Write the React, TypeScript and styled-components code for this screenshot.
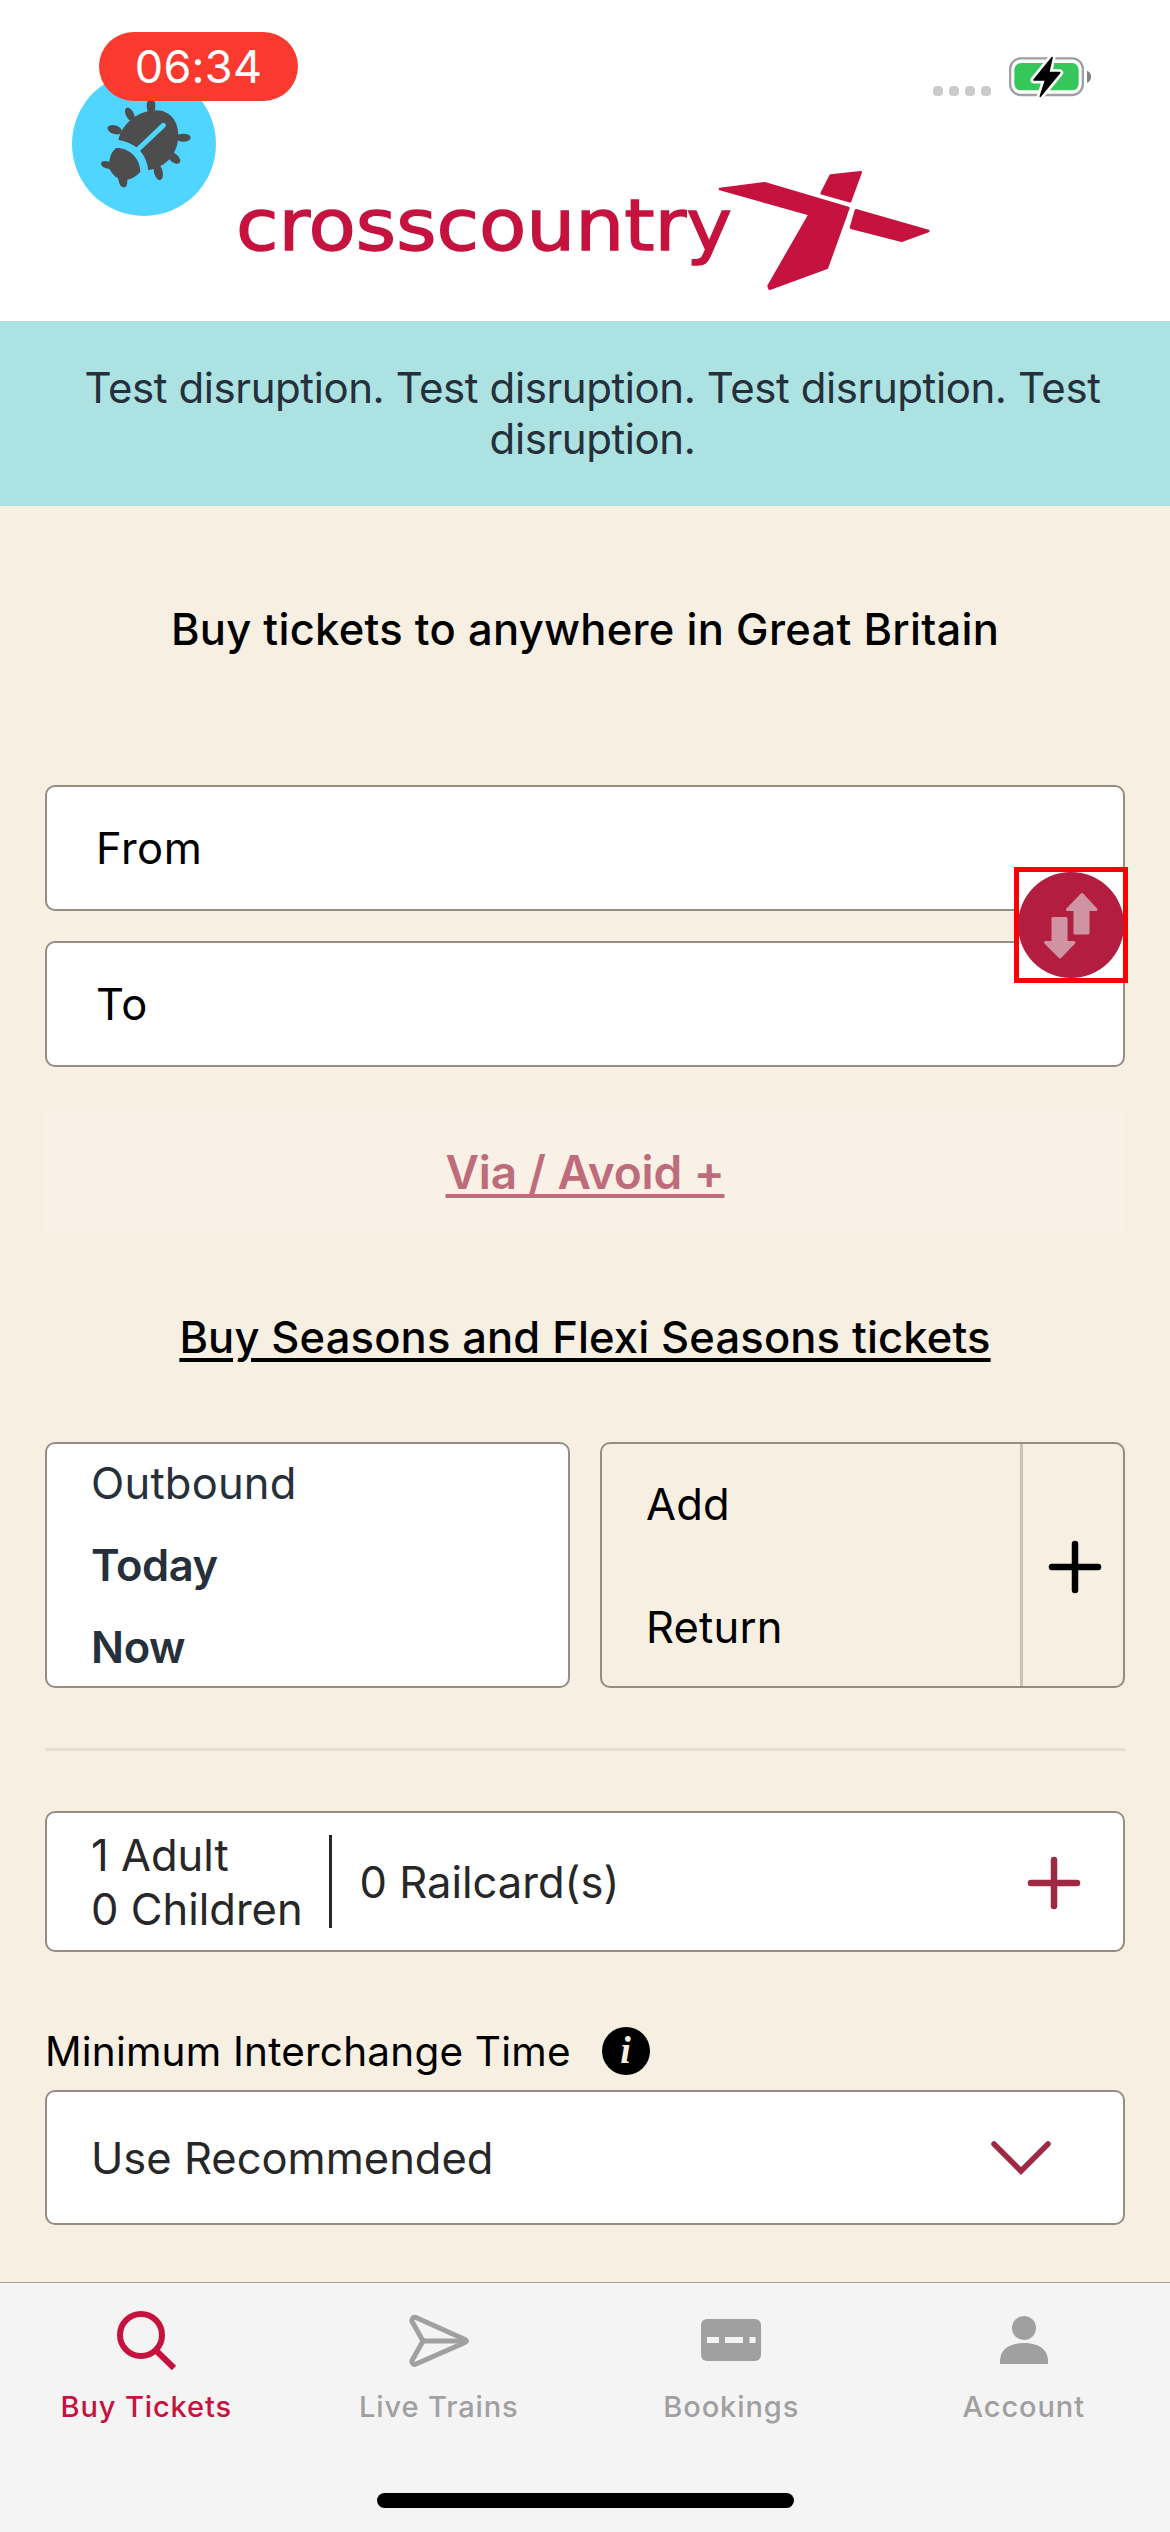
import React from "react";
import styled, { createGlobalStyle } from "styled-components";

const color = {
  brand: "#c5123f",
  crimson: "#9f2942",
  cream: "#f7efe1",
  line: "#958d84",
  slate: "#26303a",
  ink: "#272727",
  grey: "#a0a0a0",
};

const Global = createGlobalStyle`
  * { box-sizing: border-box; }
  body {
    margin: 0;
    background: ${color.cream};
    font-family: Inter, "Liberation Sans", sans-serif;
    color: #000;
  }
  svg { display: block; flex: none; overflow: visible; }
  button { font: inherit; color: inherit; margin: 0; padding: 0; border: 0; background: none; }
`;

const Screen = styled.div`
  width: 1170px;
  height: 2532px;
  display: flex;
  flex-direction: column;
  overflow: hidden;
`;

/* ---------- header ---------- */

const Header = styled.header`
  position: relative;
  height: 321px;
  flex: none;
  background: #fff;
  display: flex;
  flex-direction: column;
  align-items: flex-end;
`;

const StatusIcons = styled.div`
  height: 165px;
  padding: 57px 78px 0 0;
  display: flex;
  align-items: flex-start;
  gap: 18px;
`;

const Signal = styled.div`
  display: flex;
  gap: 6px;
  padding-top: 29px;
`;

const SignalDot = styled.span`
  width: 10px;
  height: 10px;
  border-radius: 4px;
  background: #cbcbcb;
`;

const LogoRow = styled.div`
  width: 100%;
  padding-left: 238px;
`;

const DebugBadge = styled.div`
  position: absolute;
  left: 72px;
  top: 72px;
  width: 144px;
  height: 144px;
  border-radius: 50%;
  background: #4fd5ff;
`;

const TimePill = styled.div`
  position: absolute;
  left: 99px;
  top: 32px;
  width: 199px;
  height: 69px;
  border-radius: 35px;
  background: #fb3a2f;
  color: #fff;
  font-size: 45px;
  font-weight: 400;
  letter-spacing: 0.3px;
  line-height: 70px;
  text-align: center;
`;

/* ---------- disruption banner ---------- */

const Banner = styled.div`
  height: 185px;
  flex: none;
  padding: 41px 62px 0 77px;
  background: #ace2e1;
  color: ${color.slate};
  font-size: 42px;
  line-height: 51px;
  letter-spacing: -0.42px;
  text-align: center;
`;

/* ---------- form ---------- */

const Form = styled.main`
  flex: 1;
  min-height: 0;
  padding: 0 45px;
  display: flex;
  flex-direction: column;
`;

const Title = styled.h1`
  margin: 0 0 33px;
  height: 246px;
  flex: none;
  display: flex;
  align-items: center;
  justify-content: center;
  font-size: 43.5px;
  font-weight: 500;
  letter-spacing: 0.28px;
  white-space: nowrap;
`;

const Stations = styled.div`
  position: relative;
  display: flex;
  flex-direction: column;
  gap: 30px;
`;

const Box = styled.div`
  background: #fff;
  border: 2px solid ${color.line};
  border-radius: 10px;
  font-size: 43.5px;
`;

const StationField = styled(Box)`
  height: 126px;
  padding: 0 0 1px 49px;
  display: flex;
  align-items: center;
  letter-spacing: 0.5px;
`;

const SwapButton = styled.button`
  && {
    position: absolute;
    right: -3px;
    top: 82px;
    width: 114px;
    height: 116px;
    border: 5px solid #fb0000;
    background: #fff;
  }
`;

const ViaButton = styled.button`
  && {
    height: 122px;
    flex: none;
    margin-top: 44px;
    background: #f9f1e5;
    color: #be6c7b;
    font-size: 46px;
    font-weight: 600;
    letter-spacing: -0.1px;
    text-decoration: underline;
    text-decoration-thickness: 4px;
    text-underline-offset: 5px;
  }
`;

const SeasonsLink = styled.a`
  height: 209px;
  flex: none;
  padding-bottom: 2px;
  display: flex;
  align-items: center;
  justify-content: center;
  font-size: 43.5px;
  font-weight: 500;
  letter-spacing: 0.15px;
  text-decoration: underline;
  text-decoration-thickness: 4px;
  text-underline-offset: 5px;
`;

const Journeys = styled.div`
  display: grid;
  grid-template: 246px / 1fr 1fr;
  gap: 30px;
`;

const Outbound = styled(Box)`
  padding-left: 44px;
  display: flex;
  flex-direction: column;
  justify-content: center;
  color: ${color.slate};
`;

const Line = styled.div<{ $height: number; $bold?: boolean }>`
  height: ${(p) => p.$height}px;
  flex: none;
  display: flex;
  align-items: center;
  font-weight: ${(p) => (p.$bold ? 600 : 400)};
  letter-spacing: ${(p) => (p.$bold ? "-0.4px" : "0.2px")};
`;

const Return = styled(Box)`
  background: transparent;
  display: grid;
  grid-template: 242px / 1fr 100px;
`;

const ReturnText = styled.div`
  padding-left: 44px;
  display: flex;
  flex-direction: column;
  justify-content: center;
  border-right: 3px solid #c9c1b6;
`;

const AddCell = styled.div`
  display: flex;
  align-items: center;
  justify-content: center;
  padding: 1px 0 0 3px;
`;

const Divider = styled.hr`
  width: 100%;
  height: 3px;
  flex: none;
  margin: 60px 0;
  border: 0;
  background: #e6dece;
`;

const Passengers = styled(Box)`
  height: 141px;
  flex: none;
  padding: 0 42px 0 44px;
  display: flex;
  align-items: center;
  color: ${color.ink};
`;

const People = styled.div`
  line-height: 54px;
  padding-right: 26px;
`;

const Bar = styled.span`
  width: 3px;
  height: 93px;
  margin-right: 28px;
  background: ${color.ink};
`;

const Grow = styled.div`
  flex: 1;
`;

const InfoRow = styled.div`
  height: 48px;
  flex: none;
  margin: 75px 0 15px;
  display: flex;
  align-items: center;
  gap: 31px;
  font-size: 40.5px;
  letter-spacing: 0.2px;
`;

const InfoIcon = styled.span`
  width: 48px;
  height: 48px;
  border-radius: 50%;
  background: #000;
  color: ${color.cream};
  font: italic 700 38px/46px "Liberation Serif", serif;
  text-align: center;
`;

const Select = styled(Box)`
  height: 135px;
  flex: none;
  padding: 0 72px 0 44px;
  display: flex;
  align-items: center;
  color: ${color.ink};
`;

/* ---------- tab bar ---------- */

const TabBar = styled.nav`
  height: 250px;
  flex: none;
  border-top: 1px solid #a9a299;
  background: #f4f4f4;
  display: flex;
  flex-direction: column;
  align-items: center;
`;

const Tabs = styled.div`
  width: 100%;
  height: 210px;
  display: grid;
  grid-template-columns: repeat(4, 1fr);
`;

const Tab = styled.div<{ $active?: boolean }>`
  display: flex;
  flex-direction: column;
  align-items: center;
  padding-top: 21px;
  gap: 17px;
  color: ${(p) => (p.$active ? color.brand : color.grey)};
  font-size: 29px;
  font-weight: 500;
  letter-spacing: 0.9px;
  line-height: 36px;
`;

const HomeIndicator = styled.div`
  width: 417px;
  height: 15px;
  border-radius: 8px;
  background: #000;
`;

/* ---------- drawings ---------- */

const Bug = () => (
  <svg width="144" height="144" viewBox="66 186 432 432">
    <g fill="#4d4d4d">
      <path d="M205 390C218 336 270 300 320 301C362 302 385 336 385 374C385 428 352 470 295 481C292 458 284 440 274 427L258 411C243 400 224 393 205 390Z" />
      <path d="M199 414C240 414 271 446 271 486C258 500 246 507 232 509C232 524 230 533 220 532C210 531 207 518 204 505C192 498 184 488 179 477C165 474 153 470 153 461C154 451 166 452 178 455C180 437 187 422 199 414Z" />
      <ellipse cx="303" cy="288" rx="13" ry="24" />
      <ellipse cx="240" cy="314" rx="12" ry="23" transform="rotate(-28 240 314)" />
      <ellipse cx="194" cy="359" rx="22" ry="13" transform="rotate(18 194 359)" />
      <ellipse cx="400" cy="383" rx="22" ry="12" />
      <ellipse cx="372" cy="444" rx="22" ry="13" transform="rotate(40 372 444)" />
      <ellipse cx="325" cy="486" rx="13" ry="25" transform="rotate(-14 325 486)" />
    </g>
    <path d="M262 420L340 346" stroke="#4fd5ff" strokeWidth="15" strokeLinecap="round" />
  </svg>
);

const Battery = () => (
  <svg width="83" height="40" viewBox="327 53 249 120">
    <rect x="330.500" y="57" width="218" height="110" rx="32" fill="#fff" stroke="#a09fa3" strokeWidth="7" />
    <rect x="343" y="71" width="193" height="82" rx="20" fill="#35c759" />
    <path d="M561 94Q573 98 573 112T561 130Z" fill="#808083" />
    <path
      d="M456 55L402 122H437L421 171L479 100H446Z"
      fill="#fff"
      stroke="#fff"
      strokeWidth="21"
      strokeLinejoin="round"
    />
    <path d="M456 55L402 122H437L421 171L479 100H446Z" stroke="#000" strokeWidth="5" strokeLinejoin="round" />
  </svg>
);

const Logo = () => (
  <svg width="695" height="130" viewBox="238 165 695 130" fill={color.brand}>
    <text
      x="236"
      y="250"
      fontFamily="'DejaVu Sans', sans-serif"
      fontSize="71"
      textLength="496"
      lengthAdjust="spacingAndGlyphs"
      stroke={color.brand}
      strokeWidth="1.4"
    >
      crosscountry
    </text>
    <g transform="translate(600 150) scale(0.33333)" stroke={color.brand} strokeWidth="8" strokeLinejoin="round">
      <path d="M360 117L494 100L745 174L681 353L509 416L506 408L629 193Z" />
      <path d="M692 77L782 67L750 154L665 130Z" />
      <path d="M768 181L985 243L905 272L753 233Z" />
    </g>
  </svg>
);

const Plus = ({ stroke }: { stroke: string }) => (
  <svg width="54" height="54" viewBox="0 0 54 54" stroke={stroke} strokeWidth="6.500" strokeLinecap="round">
    <path d="M27 5V51M4 28H50" />
  </svg>
);

const SwapArrows = () => (
  <svg width="104" height="106" viewBox="0 0 104 106">
    <circle cx="52" cy="53" r="53" fill="#b31e40" />
    <g fill="#d093a4" stroke="#d093a4" strokeWidth="3" strokeLinejoin="round">
      <path d="M63 22.500L77 37.500H69V61H56V37.500H48.500Z" />
      <path d="M41 85L55 70.500H47V46.500H34V70.500H26.500Z" />
    </g>
  </svg>
);

const Chevron = () => (
  <svg width="60" height="34" viewBox="0 0 60 34" fill="none" stroke={color.crimson} strokeWidth="5.500" strokeLinecap="round">
    <path d="M3 3L30 30L57 3" />
  </svg>
);

const SearchIcon = () => (
  <svg width="68" height="68" viewBox="0 0 68 68" fill="none" stroke="currentColor" strokeWidth="6">
    <circle cx="29" cy="31" r="21" />
    <path d="M43.500 46L62 64" />
  </svg>
);

const SendIcon = () => (
  <svg width="68" height="68" viewBox="0 0 68 68" fill="none" stroke="currentColor" strokeWidth="5" strokeLinejoin="round">
    <path d="M10.500 13.300Q7.500 12.500 6.800 17L18 37L6.800 57Q7.500 61.500 11 60L60 38.500Q63 37 60 35.500L12 14Z" />
    <path d="M18 37H61" />
  </svg>
);

const TicketIcon = () => (
  <svg width="68" height="68" viewBox="0 0 68 68" fill="currentColor">
    <rect x="4" y="15" width="60" height="42" rx="6" />
    <path d="M10 33H22V39H10ZM28 33H46V39H28ZM52.500 33H58.500V39H52.500Z" fill="#f4f4f4" />
  </svg>
);

const PersonIcon = () => (
  <svg width="68" height="68" viewBox="0 0 68 68" fill="currentColor">
    <circle cx="34" cy="24" r="12" />
    <path d="M10 60V57C10 45 20 39 34 39S58 45 58 57V60Z" />
  </svg>
);

export default function App() {
  return (
    <Screen>
      <Global />
      <Header>
        <StatusIcons>
          <Signal>
            {[0, 1, 2, 3].map((dot) => (
              <SignalDot key={dot} />
            ))}
          </Signal>
          <Battery />
        </StatusIcons>
        <LogoRow>
          <Logo />
        </LogoRow>
        <DebugBadge>
          <Bug />
        </DebugBadge>
        <TimePill>06:34</TimePill>
      </Header>

      <Banner>Test disruption. Test disruption. Test disruption. Test disruption.</Banner>

      <Form>
        <Title>Buy tickets to anywhere in Great Britain</Title>
        <Stations>
          <StationField>From</StationField>
          <StationField>To</StationField>
          <SwapButton aria-label="Swap stations">
            <SwapArrows />
          </SwapButton>
        </Stations>
        <ViaButton>Via / Avoid +</ViaButton>
        <SeasonsLink>Buy Seasons and Flexi Seasons tickets</SeasonsLink>
        <Journeys>
          <Outbound>
            <Line $height={82}>Outbound</Line>
            <Line $height={82} $bold>
              Today
            </Line>
            <Line $height={82} $bold>
              Now
            </Line>
          </Outbound>
          <Return>
            <ReturnText>
              <Line $height={123}>Add</Line>
              <Line $height={123}>Return</Line>
            </ReturnText>
            <AddCell>
              <Plus stroke="#000" />
            </AddCell>
          </Return>
        </Journeys>
        <Divider />
        <Passengers>
          <People>
            <div>1 Adult</div>
            <div>0 Children</div>
          </People>
          <Bar />
          <Grow>0 Railcard(s)</Grow>
          <Plus stroke={color.crimson} />
        </Passengers>
        <InfoRow>
          Minimum Interchange Time
          <InfoIcon>i</InfoIcon>
        </InfoRow>
        <Select>
          <Grow>Use Recommended</Grow>
          <Chevron />
        </Select>
      </Form>

      <TabBar>
        <Tabs>
          <Tab $active>
            <SearchIcon />
            Buy Tickets
          </Tab>
          <Tab>
            <SendIcon />
            Live Trains
          </Tab>
          <Tab>
            <TicketIcon />
            Bookings
          </Tab>
          <Tab>
            <PersonIcon />
            Account
          </Tab>
        </Tabs>
        <HomeIndicator />
      </TabBar>
    </Screen>
  );
}
